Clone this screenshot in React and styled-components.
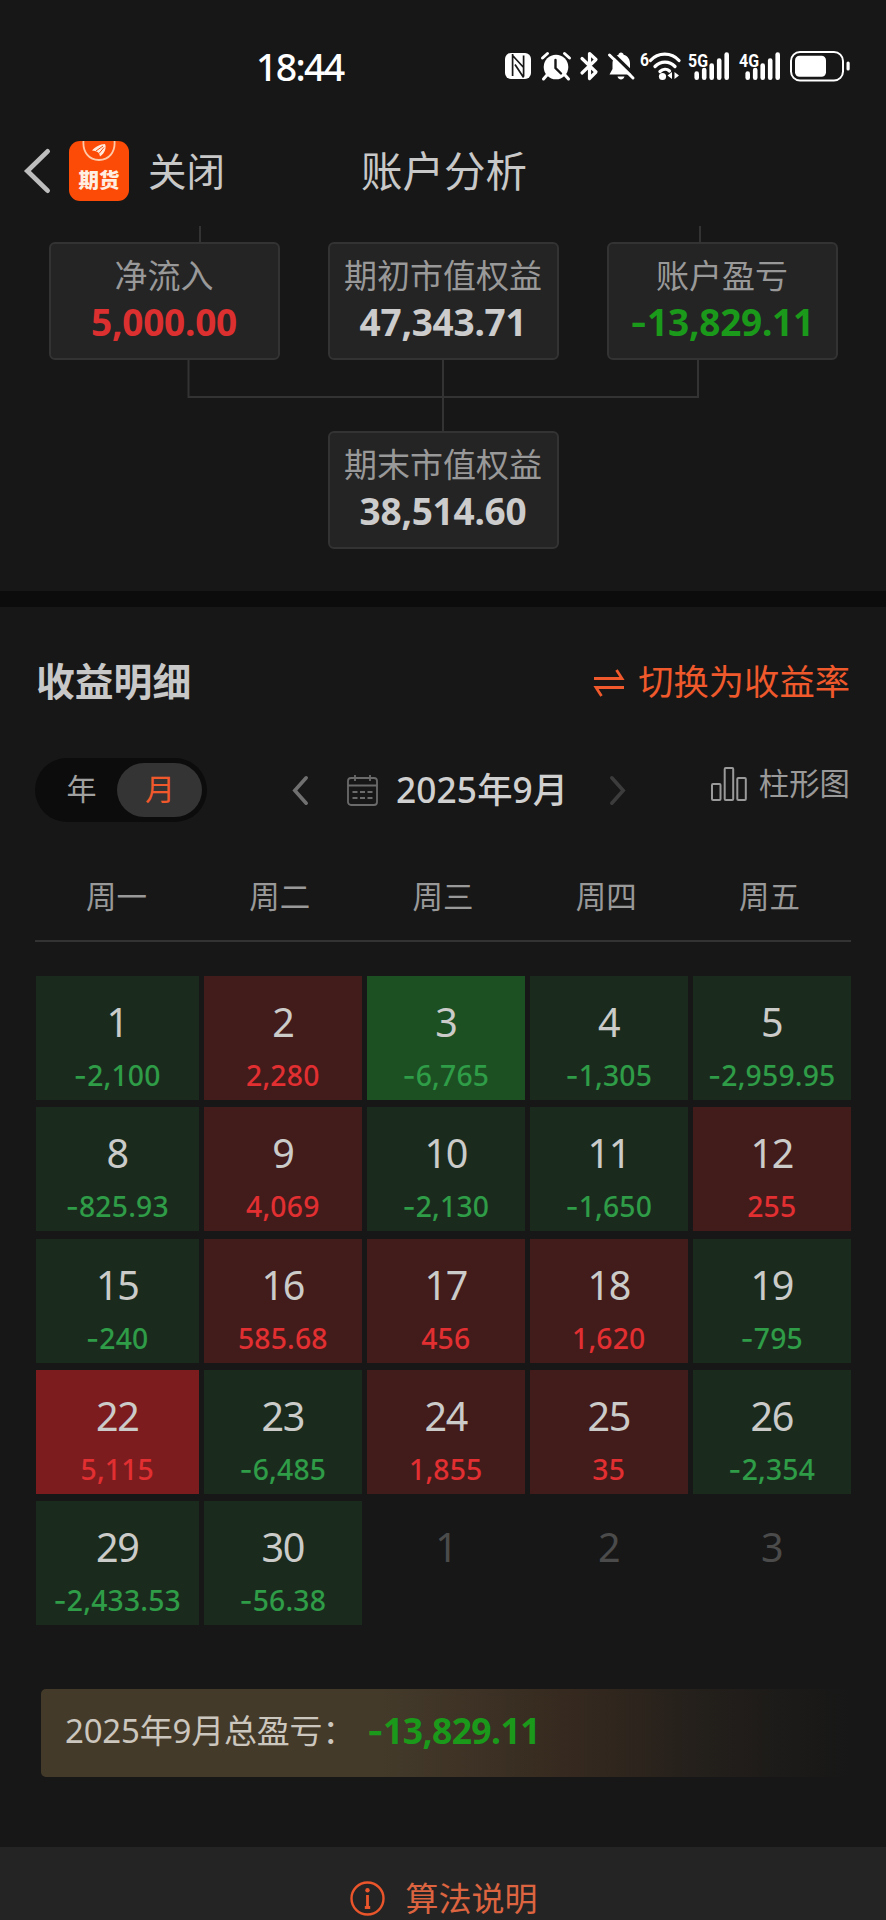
import React from "react";
import styled, { createGlobalStyle, css } from "styled-components";

const GlobalStyle = createGlobalStyle`
  * { box-sizing: border-box; }
  body {
    margin: 0;
    background: #171717;
    font-family: "Noto Sans", "Noto Sans CJK SC", sans-serif;
    color: #c8c8c8;
  }
`;

const colors = {
  accent: "#f0592b",
  line: "#333333",
  gain: "#dc3030",
  loss: "#1a991a",
};

const Screen = styled.main`
  width: 886px;
  height: 1920px;
  overflow: hidden;
  display: flex;
  flex-direction: column;
  background: #171717;
  white-space: nowrap;

  > * {
    flex-shrink: 0;
  }
`;

const Icon = styled.svg`
  display: block;
  flex: none;
  overflow: visible;
  margin: ${(p) => p.$margin || 0};
`;

/* Status bar */

const StatusBar = styled.div`
  height: 116px;
  padding: 50px 36px 0 256px;
  display: flex;
  align-items: flex-start;
  justify-content: space-between;
  color: #fff;
`;

const Clock = styled.span`
  font-size: 37.5px;
  line-height: 33px;
  letter-spacing: -1.7px;
  font-weight: 500;
`;

const StatusIcons = styled.div`
  display: flex;
  height: 32px;
`;

const NetLabel = styled.text`
  font-family: Roboto, sans-serif;
  font-weight: 700;
  fill: #fff;
`;

/* Navigation header */

const NavBar = styled.header`
  height: 110px;
  padding-left: 25px;
  display: grid;
  grid-template-columns: 44px 60px 19px 213px auto;
  align-items: center;
`;

const AppBadge = styled.div`
  width: 60px;
  height: 60px;
  border-radius: 11px;
  background: #fb4b07;
  display: flex;
  flex-direction: column;
  align-items: center;
  overflow: hidden;
`;

const BadgeText = styled.span`
  margin-top: 6px;
  font-size: 20.5px;
  line-height: 24px;
  font-weight: 900;
  color: #ffeee2;
`;

const CloseText = styled.span`
  grid-column: 4;
  font-size: 38.5px;
  line-height: 50px;
`;

const Title = styled.h1`
  margin: 0;
  font-size: 41.5px;
  line-height: 50px;
  font-weight: 400;
`;

/* Equity flow diagram */

const Flow = styled.section`
  height: 365px;
  display: flex;
  flex-direction: column;
  align-items: center;
`;

const FlowRow = styled.div`
  display: flex;
  gap: 48px;
`;

const FlowCard = styled.div`
  width: 231px;
  height: 118px;
  padding-top: 12px;
  border: 2px solid ${colors.line};
  border-radius: 6px;
  background: #242424;
  display: flex;
  flex-direction: column;
  align-items: center;
`;

const FlowLabel = styled.span`
  font-size: 33px;
  line-height: 40px;
  color: #999;
`;

const toneColor = { gain: colors.gain, loss: colors.loss, plain: "#cccccc" };

const FlowValue = styled.span`
  margin-top: 6px;
  font-size: 37px;
  line-height: 40px;
  font-weight: 700;
  letter-spacing: -0.25px;
  color: ${(p) => toneColor[p.$tone]};
`;

const Sign = styled.span`
  font-family: Inter, sans-serif;
`;

const Divider = styled.div`
  height: 16px;
  background: #0c0c0c;
`;

/* Details section */

const Details = styled.section`
  height: 1240px;
  padding: 49px 35px 0;
  display: flex;
  flex-direction: column;
`;

const DetailsHead = styled.div`
  height: 50px;
  padding: 0 1px 0 1px;
  display: flex;
  align-items: center;
  justify-content: space-between;
`;

const SectionTitle = styled.h2`
  margin: 0;
  font-size: 38.8px;
  line-height: 50px;
  font-weight: 700;
`;

const SwitchLink = styled.div`
  display: flex;
  align-items: center;
  gap: 14px;
  font-size: 35.3px;
  line-height: 50px;
  color: ${colors.accent};
`;

const Controls = styled.div`
  height: 64px;
  margin-top: 52px;
  display: flex;
  align-items: center;
`;

const Segmented = styled.div`
  width: 172px;
  height: 64px;
  padding: 5px;
  border-radius: 32px;
  background: #0c0c0c;
  display: flex;
`;

const Segment = styled.span`
  width: ${(p) => (p.$active ? 85 : 77)}px;
  height: 54px;
  padding-left: ${(p) => (p.$active ? 1 : 6)}px;
  border-radius: 27px;
  font-size: 30px;
  line-height: 52px;
  text-align: center;
  color: #a0a0a0;
  ${(p) =>
    p.$active &&
    css`
      background: #343434;
      color: ${colors.accent};
    `}
`;

const MonthPicker = styled.div`
  margin-left: 86px;
  display: flex;
  align-items: center;
`;

const MonthText = styled.span`
  width: 170px;
  margin: 0 44px 2px 18px;
  font-size: 35.3px;
  line-height: 46px;
  font-weight: 500;
  letter-spacing: 0.1px;
  color: #d0d0d0;
`;

const ChartLink = styled.div`
  margin: 0 1px 12px auto;
  display: flex;
  align-items: center;
  gap: 12px;
  font-size: 30.4px;
  line-height: 42px;
  color: #9a9a9a;
`;

const Weekdays = styled.div`
  height: 120px;
  padding-top: 53px;
  display: grid;
  grid-template-columns: repeat(5, 1fr);
  border-bottom: 2px solid ${colors.line};
  font-size: 30.5px;
  line-height: 42px;
  text-align: center;
  color: #999;
`;

const Calendar = styled.div`
  margin: 34px 0 0 0.5px;
  display: grid;
  grid-template-columns: 163.5px repeat(4, 158.4px);
  grid-auto-rows: 124px;
  gap: 7.25px 4.6px;
`;

const cellBackground = {
  loss: "#1a2b1e",
  lossMax: "#1c5023",
  gain: "#421b1b",
  gainMax: "#7d1c1e",
  none: "transparent",
};

const DayCell = styled.div`
  padding-top: 23px;
  display: flex;
  flex-direction: column;
  align-items: center;
  background: ${(p) => cellBackground[p.$kind]};
`;

const DayNumber = styled.span`
  font-size: 39.5px;
  line-height: 46px;
  letter-spacing: -1.3px;
  color: ${(p) => (p.$muted ? "#4b4b4b" : "#cbcbc9")};
`;

const DayAmount = styled.span`
  margin-top: 13px;
  font-size: 28.3px;
  line-height: 34px;
  letter-spacing: 0.2px;
  font-weight: 500;
  color: ${(p) => (p.$gain ? "#e22f31" : "#2f9c47")};
`;

const Summary = styled.div`
  width: 810px;
  height: 88px;
  margin: 64px 0 0 6px;
  padding: 0 24px 4px;
  border-radius: 5px;
  display: flex;
  align-items: center;
  background: linear-gradient(90deg, #443a2a 0%, #443a2a 42%, #35291f 66%, #231f1b 82%, #171717 100%);
`;

const SummaryLabel = styled.span`
  width: 302px;
  font-size: 33px;
  line-height: 48px;
  letter-spacing: -0.2px;
  color: #cbc6be;
`;

const SummaryValue = styled.span`
  font-size: 35.5px;
  line-height: 48px;
  font-weight: 700;
  letter-spacing: -0.6px;
  color: ${colors.loss};
`;

const Footer = styled.footer`
  height: 73px;
  padding: 27px 0 0 1px;
  display: flex;
  align-items: flex-start;
  justify-content: center;
  gap: 21px;
  background: #242424;
  font-size: 33px;
  line-height: 50px;
  color: #dc6440;
`;

function Money({ value }) {
  return value.startsWith("-") ? (
    <>
      <Sign>-</Sign>
      {value.slice(1)}
    </>
  ) : (
    value
  );
}

function SignalBars({ label, margin }) {
  const tops = [22, 18.5, 14, 9, 3];
  return (
    <Icon width="42" height="32" viewBox="0 0 42 32" $margin={margin}>
      <NetLabel x="0" y="16.5" fontSize="19" textLength="20" lengthAdjust="spacingAndGlyphs">
        {label}
      </NetLabel>
      {tops.map((top, i) => (
        <line key={top} x1={8.7 + i * 7.5} x2={8.7 + i * 7.5} y1={top + 1.5} y2="27.7" stroke="#fff" strokeWidth="4.6" strokeLinecap="round" />
      ))}
    </Icon>
  );
}

function StatusGlyphs() {
  return (
    <StatusIcons>
      <Icon width="26" height="32" viewBox="0 0 26 32">
        <rect x="0" y="3" width="26" height="26" rx="6" fill="#fff" />
        <path d="M7.600 4v22M7.600 5.500L18.600 17.500M18.600 5.500v21M10 14.500L18.600 27.500" stroke="#171717" strokeWidth="1.700" fill="none" />
      </Icon>
      <Icon width="30" height="32" viewBox="0 0 30 32" $margin="0 0 0 10px">
        <circle cx="15" cy="17" r="12.300" fill="#fff" />
        <path d="M1.500 8l5-4.500M28.500 8l-5-4.500M6 25l-3.500 4M24 25l3.500 4" stroke="#fff" strokeWidth="3" strokeLinecap="round" />
        <path d="M14.500 10v8l5.500 5.500" stroke="#171717" strokeWidth="2.400" fill="none" strokeLinecap="round" />
      </Icon>
      <Icon width="18" height="32" viewBox="0 0 18 32" $margin="0 0 0 9px">
        <path d="M2 8.500L16 22l-6.500 6.500v-25L16 9.500 2 23" stroke="#fff" strokeWidth="3.200" fill="none" strokeLinejoin="round" strokeLinecap="round" />
      </Icon>
      <Icon width="26" height="32" viewBox="0 0 26 32" $margin="0 0 0 9.5px">
        <path d="M13 2.500c1.500 0 2.400 1 2.600 2.200C20 6 22 9.500 22 13.500V19l3 5.500H1.500L4.500 19v-5.500C4.500 9 7 6 10.500 4.700 10.800 3.500 11.600 2.500 13 2.500z" fill="#fff" />
        <path d="M9.500 26.500h7c-.8 2.200-2 3-3.500 3s-2.800-.8-3.500-3z" fill="#fff" />
        <path d="M3.500 2.500L27 25.500" stroke="#171717" strokeWidth="3.200" />
        <path d="M1.500 5L25 28" stroke="#fff" strokeWidth="3" strokeLinecap="round" />
      </Icon>
      <Icon width="40" height="32" viewBox="0 0 40 32" $margin="0 7px 0 7.5px">
        <NetLabel x="-1" y="16" fontSize="19" textLength="9" lengthAdjust="spacingAndGlyphs">6</NetLabel>
        <g fill="none" stroke="#fff" strokeWidth="3.300" strokeLinecap="round">
          <path d="M9.500 10.500C17 2 30.500 2 38 10.500" />
          <path d="M14 16.500c5.500-5.800 14.500-5.800 20 0" />
          <path d="M19 21.500c3-2.800 7-2.800 9.500-.5" />
        </g>
        <circle cx="21.500" cy="26.500" r="3.600" fill="#fff" />
        <path d="M31 22v7l-4.500-3.500zM33.500 22v7l4.500-3.500z" fill="#fff" />
      </Icon>
      <SignalBars label="5G" margin="0 9px 0 0" />
      <SignalBars label="4G" />
      <Icon width="60" height="32" viewBox="0 0 60 32" $margin="0 0 0 9px">
        <rect x="1" y="2" width="52" height="28.500" rx="9" fill="none" stroke="#fff" strokeWidth="2" />
        <rect x="5" y="5.800" width="31" height="21" rx="4.500" fill="#fff" />
        <rect x="56.500" y="11.500" width="3.200" height="9" rx="1.500" fill="#fff" />
      </Icon>
    </StatusIcons>
  );
}

function Chevron({ width, height, color, stroke, right }) {
  const s = stroke / 2;
  const points = right
    ? `${s},${s} ${width - s},${height / 2} ${s},${height - s}`
    : `${width - s},${s} ${s},${height / 2} ${width - s},${height - s}`;
  return (
    <Icon width={width} height={height}>
      <polyline points={points} fill="none" stroke={color} strokeWidth={stroke} strokeLinecap="round" strokeLinejoin="miter" />
    </Icon>
  );
}

const weekdays = ["周一", "周二", "周三", "周四", "周五"];

const days = [
  ["1", "-2,100"], ["2", "2,280"], ["3", "-6,765", "lossMax"], ["4", "-1,305"], ["5", "-2,959.95"],
  ["8", "-825.93"], ["9", "4,069"], ["10", "-2,130"], ["11", "-1,650"], ["12", "255"],
  ["15", "-240"], ["16", "585.68"], ["17", "456"], ["18", "1,620"], ["19", "-795"],
  ["22", "5,115", "gainMax"], ["23", "-6,485"], ["24", "1,855"], ["25", "35"], ["26", "-2,354"],
  ["29", "-2,433.53"], ["30", "-56.38"], ["1"], ["2"], ["3"],
];

function Day({ day, amount, kind }) {
  if (!amount) {
    return (
      <DayCell $kind="none">
        <DayNumber $muted>{day}</DayNumber>
      </DayCell>
    );
  }
  const gain = !amount.startsWith("-");
  return (
    <DayCell $kind={kind || (gain ? "gain" : "loss")}>
      <DayNumber>{day}</DayNumber>
      <DayAmount $gain={gain}>
        <Money value={amount} />
      </DayAmount>
    </DayCell>
  );
}

function FlowItem({ label, value, tone = "plain" }) {
  return (
    <FlowCard>
      <FlowLabel>{label}</FlowLabel>
      <FlowValue $tone={tone}>
        <Money value={value} />
      </FlowValue>
    </FlowCard>
  );
}

export default function App() {
  return (
    <Screen lang="zh-CN">
      <GlobalStyle />
      <StatusBar>
        <Clock>18:44</Clock>
        <StatusGlyphs />
      </StatusBar>

      <NavBar>
        <Chevron width={25} height={44} color="#bdbdbd" stroke={4.8} />
        <AppBadge>
          <Icon width="36" height="21" viewBox="0 0 36 21">
            <path d="M2.500 0C1.500 11 8 19 18 19S34.500 11 33.500 0" fill="none" stroke="#ffc9a8" strokeWidth="1.800" />
            <path d="M11 9.500C14 6 19 3 24 3c1.500 3 .5 9-5 12.500-.5-2.500-1-3.500-2.500-4.500-1.500-.8-3-1.200-5.500-1.500z" fill="#ffe9db" />
            <path d="M15 10l7-5M18 12.500l5-6" stroke="#fb4b07" strokeWidth="1" />
          </Icon>
          <BadgeText>期货</BadgeText>
        </AppBadge>
        <CloseText>关闭</CloseText>
        <Title>账户分析</Title>
      </NavBar>

      <Flow>
        <Icon width="886" height="16">
          <path d="M200 0v16M700 0v16" stroke={colors.line} strokeWidth="2" />
        </Icon>
        <FlowRow>
          <FlowItem label="净流入" value="5,000.00" tone="gain" />
          <FlowItem label="期初市值权益" value="47,343.71" />
          <FlowItem label="账户盈亏" value="-13,829.11" tone="loss" />
        </FlowRow>
        <Icon width="886" height="71">
          <path d="M188.500 0v37H698V0M443 0v71" fill="none" stroke={colors.line} strokeWidth="2" />
        </Icon>
        <FlowItem label="期末市值权益" value="38,514.60" />
      </Flow>

      <Divider />

      <Details>
        <DetailsHead>
          <SectionTitle>收益明细</SectionTitle>
          <SwitchLink>
            <Icon width="30" height="28" viewBox="0 0 30 28" $margin="3px 0 0">
              <path d="M0 9.500h28L22.500 1M30 18.500H2L7.500 27" fill="none" stroke={colors.accent} strokeWidth="2.800" />
            </Icon>
            切换为收益率
          </SwitchLink>
        </DetailsHead>

        <Controls>
          <Segmented>
            <Segment>年</Segment>
            <Segment $active>月</Segment>
          </Segmented>
          <MonthPicker>
            <Chevron width={15} height={29} color="#707070" stroke={3.6} />
            <Icon width="31" height="31" viewBox="0 0 31 31" $margin="0 0 0 39px">
              <g fill="none" stroke="#6a6a6a" strokeWidth="1.800">
                <rect x="1" y="3" width="29" height="27" rx="3" />
                <path d="M1 10.500h29M8 0v6M23 0v6" />
                <path d="M5.500 17h5M13 17h5M20.500 17h5M5.500 23h5M13 23h5M20.500 23h5" strokeWidth="2" />
              </g>
            </Icon>
            <MonthText>2025年9月</MonthText>
            <Chevron width={15} height={29} color="#3c3c3c" stroke={3.6} right />
          </MonthPicker>
          <ChartLink>
            <Icon width="36" height="34" viewBox="0 0 36 34">
              <g fill="none" stroke="#9a9a9a" strokeWidth="2">
                <rect x="1" y="17" width="8.500" height="16" rx="1" />
                <rect x="13.700" y="1" width="8.500" height="32" rx="1" />
                <rect x="26.300" y="11" width="8.500" height="22" rx="1" />
              </g>
            </Icon>
            柱形图
          </ChartLink>
        </Controls>

        <Weekdays>
          {weekdays.map((d) => (
            <span key={d}>{d}</span>
          ))}
        </Weekdays>

        <Calendar>
          {days.map(([day, amount, kind], i) => (
            <Day key={i} day={day} amount={amount} kind={kind} />
          ))}
        </Calendar>

        <Summary>
          <SummaryLabel>2025年9月总盈亏：</SummaryLabel>
          <SummaryValue>
            <Money value="-13,829.11" />
          </SummaryValue>
        </Summary>
      </Details>

      <Footer>
        <Icon width="35" height="35" viewBox="0 0 35 35" $margin="7px 0 0">
          <circle cx="17.500" cy="17.500" r="16" fill="none" stroke="#ea552b" strokeWidth="2.400" />
          <circle cx="17.500" cy="9.300" r="2.200" fill="#ea552b" />
          <path d="M17.500 14v12.500M14.800 26.500h5.400" stroke="#ea552b" strokeWidth="2.800" />
        </Icon>
        算法说明
      </Footer>
    </Screen>
  );
}
